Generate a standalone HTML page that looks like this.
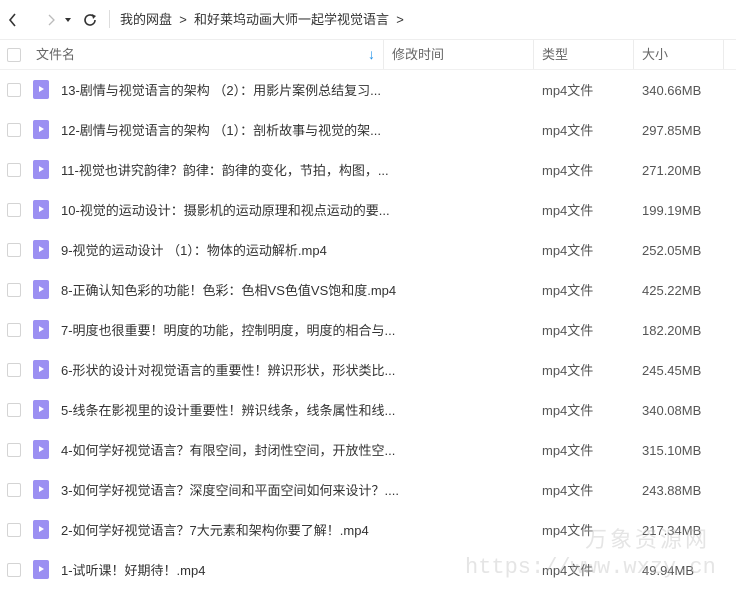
<!DOCTYPE html>
<html><head><meta charset="utf-8"><style>
body{margin:0;width:736px;height:601px;background:#fff;font-family:"Liberation Sans","Noto Sans CJK SC",sans-serif;font-size:13px;color:#333;position:relative;overflow:hidden}
.a{position:absolute;white-space:nowrap;line-height:18px;height:18px}
.cb{position:absolute;left:7px;width:12px;height:12px;border:1px solid #d4d4d4;border-radius:2px;background:#fff}
.ic{position:absolute;left:33px;width:16px;height:19px;background:#9b8ff2;border-radius:2px}
.ic:after{content:"";position:absolute;left:6px;top:6px;border-left:5px solid #fff;border-top:3.5px solid transparent;border-bottom:3.5px solid transparent}
.vl{position:absolute;top:40px;height:29px;width:1px;background:#ececec}
</style></head><body>
<svg class="a" style="left:8px;top:12px;height:16px" width="100" height="16"><path d="M7 2 L2 8 L7 14" stroke="#333" stroke-width="1.6" fill="none"/><path d="M41 3 L46 8 L41 13" stroke="#bbb" stroke-width="1.3" fill="none"/><path d="M57 6 L63 6 L60 10Z" fill="#333"/><path d="M85 4 A5 5 0 1 0 87 8" stroke="#333" stroke-width="1.6" fill="none"/><path d="M84 2 L88 4 L85 7" fill="#333"/></svg>
<div class="a" style="left:109px;top:10px;width:1px;height:18px;background:#ddd"></div>
<div class="a" style="left:120px;top:11px;color:#333">我的网盘 &nbsp;&gt;&nbsp; 和好莱坞动画大师一起学视觉语言 &nbsp;&gt;</div>
<div class="a" style="left:0;top:39px;width:736px;height:1px;background:#eee"></div>
<div class="a" style="left:0;top:69px;width:736px;height:1px;background:#f0f0f0"></div>
<div class="cb" style="top:48px"></div>
<div class="a" style="left:36px;top:46px;color:#666">文件名</div>
<div class="a" style="left:368px;top:45px;color:#1e90e8;font-size:14px;font-weight:bold">↓</div>
<div class="vl" style="left:383px"></div><div class="vl" style="left:533px"></div><div class="vl" style="left:633px"></div><div class="vl" style="left:723px"></div>
<div class="a" style="left:392px;top:46px;color:#666">修改时间</div>
<div class="a" style="left:542px;top:46px;color:#666">类型</div>
<div class="a" style="left:642px;top:46px;color:#666">大小</div>
<div id="r"></div>
<div class="a" style="left:585px;top:527px;font-size:22px;line-height:26px;height:26px;color:rgba(190,190,190,.4);letter-spacing:3px">万象资源网</div>
<div class="a" style="left:465px;top:555px;font-size:22px;line-height:26px;height:26px;font-family:'Liberation Mono',monospace;color:rgba(190,190,190,.4)">https://www.wxzy.cn</div>
<script>
var d=[["13-剧情与视觉语言的架构 （2）：用影片案例总结复习...","340.66MB"],["12-剧情与视觉语言的架构 （1）：剖析故事与视觉的架...","297.85MB"],["11-视觉也讲究韵律？韵律：韵律的变化，节拍，构图，...","271.20MB"],["10-视觉的运动设计：摄影机的运动原理和视点运动的要...","199.19MB"],["9-视觉的运动设计 （1）：物体的运动解析.mp4","252.05MB"],["8-正确认知色彩的功能！色彩：色相VS色值VS饱和度.mp4","425.22MB"],["7-明度也很重要！明度的功能，控制明度，明度的相合与...","182.20MB"],["6-形状的设计对视觉语言的重要性！辨识形状，形状类比...","245.45MB"],["5-线条在影视里的设计重要性！辨识线条，线条属性和线...","340.08MB"],["4-如何学好视觉语言？有限空间，封闭性空间，开放性空...","315.10MB"],["3-如何学好视觉语言？深度空间和平面空间如何来设计？....","243.88MB"],["2-如何学好视觉语言？7大元素和架构你要了解！.mp4","217.34MB"],["1-试听课！好期待！.mp4","49.94MB"]];
var h="";d.forEach(function(x,i){var y=90+i*40;h+='<div class="cb" style="top:'+(y-7)+'px"></div><div class="ic" style="top:'+(y-10)+'px"></div><div class="a" style="left:61px;top:'+(y-8)+'px">'+x[0]+'</div><div class="a" style="left:542px;top:'+(y-8)+'px;color:#555">mp4文件</div><div class="a" style="left:642px;top:'+(y-8)+'px;color:#555">'+x[1]+'</div>';});
document.getElementById("r").innerHTML=h;
</script>
</body></html>
